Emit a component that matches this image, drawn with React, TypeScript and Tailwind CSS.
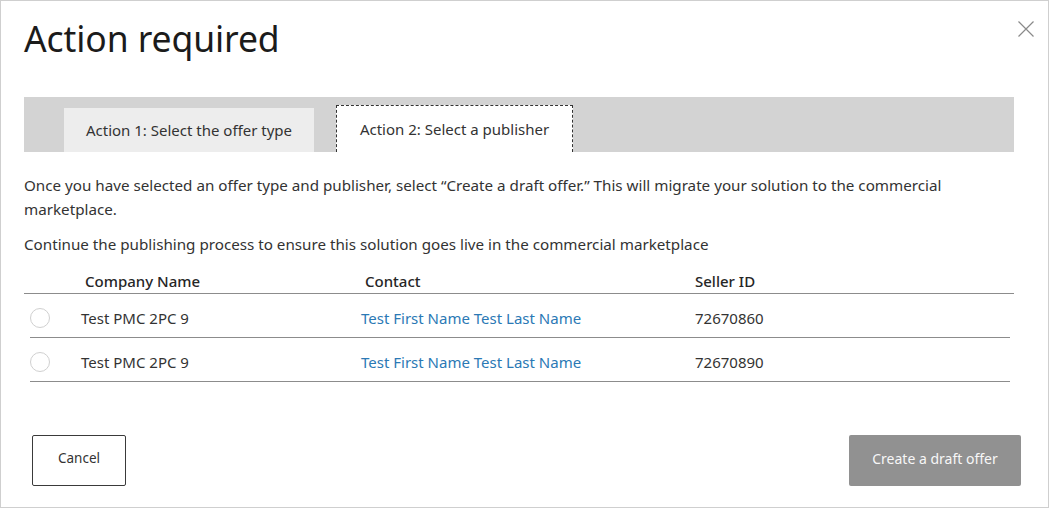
import React from "react";

const font = { fontFamily: '"Noto Sans", "Open Sans", sans-serif' };

function Radio() {
  return <div className="w-[20px] h-[20px] rounded-full border border-[#d0d0d0] bg-white" />;
}

export default function App() {
  const rows = [
    { name: "Test PMC 2PC 9", contact: "Test First Name Test Last Name", id: "72670860" },
    { name: "Test PMC 2PC 9", contact: "Test First Name Test Last Name", id: "72670890" },
  ];
  return (
    <div
      className="w-[1049px] h-[508px] bg-white border border-[#cfcfcf] relative text-[#262626]"
      style={font}
    >
      <button className="absolute right-[13px] top-[19px] w-[18px] h-[18px] text-[#8a8a8a]">
        <svg width="18" height="18" viewBox="0 0 18 18" fill="none" stroke="currentColor" strokeWidth="1.2">
          <path d="M1.5 1.5 L16.5 16.5 M16.5 1.5 L1.5 16.5" />
        </svg>
      </button>
      <div className="pl-[23px] pr-[34px]">
        <h1 className="text-[35.5px] leading-[40px] pt-[17px] font-normal text-[#1b1b1b] tracking-[-0.1px]">
          Action required
        </h1>
        <div className="mt-[39px] h-[55px] bg-[#d3d3d3] flex items-end pl-[40px] gap-[22px]">
          <div className="h-[44px] w-[250px] bg-[#ededed] flex items-center justify-center text-[15px] text-[#333] pt-[1px]">
            Action 1: Select the offer type
          </div>
          <div className="h-[47px] w-[237px] bg-white border border-dashed border-b-0 border-[#333] flex items-center justify-center text-[15px] text-[#333] pt-[1px]">
            Action 2: Select a publisher
          </div>
        </div>
        <p className="mt-[21px] text-[15.2px] leading-[24px] text-[#333] pr-[40px]">
          Once you have selected an offer type and publisher, select “Create a draft offer.” This will migrate your solution to the commercial marketplace.
        </p>
        <p className="mt-[11px] text-[15.2px] leading-[24px] text-[#333]">
          Continue the publishing process to ensure this solution goes live in the commercial marketplace
        </p>
        <div className="mt-[2px]">
          <div className="flex h-[36px] items-end pb-[1px] border-b border-[#8c8c8c] text-[15px] font-medium text-[#262626]">
            <div className="w-[61px]" />
            <div className="w-[280px]">Company Name</div>
            <div className="w-[330px]">Contact</div>
            <div>Seller ID</div>
          </div>
          {rows.map((r, i) => (
            <div key={i} className="ml-[6px] mr-[4px] flex items-center h-[44px] pt-[5px] border-b border-[#8c8c8c] text-[15px] text-[#333]">
              <div className="w-[51px]">
                <Radio />
              </div>
              <div className="w-[280px]">{r.name}</div>
              <div className="w-[334px] text-[#2b79b5]">{r.contact}</div>
              <div>{r.id}</div>
            </div>
          ))}
        </div>
        <div className="mt-[53px] flex justify-between items-center pl-[8px] mr-[-7px]">
          <button className="w-[94px] h-[51px] border border-[#3a3a3a] rounded-[2px] text-[13.5px] text-[#333] bg-white pb-[4px]">
            Cancel
          </button>
          <button className="w-[172px] h-[51px] rounded-[2px] bg-[#919191] text-[14px] text-[#f7f7f7] pb-[4px]">
            Create a draft offer
          </button>
        </div>
      </div>
    </div>
  );
}
